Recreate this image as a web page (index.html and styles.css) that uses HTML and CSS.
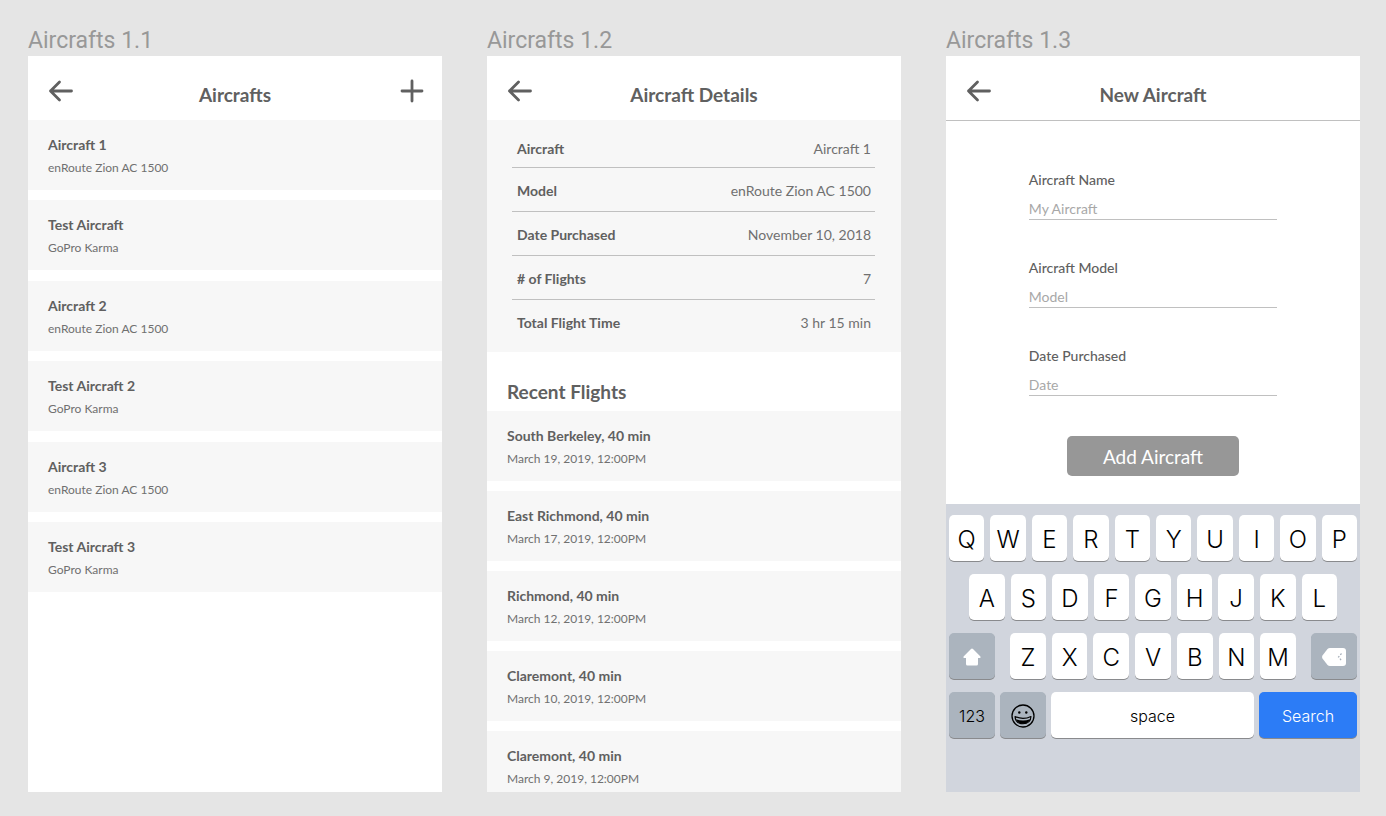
FILE: index.html
```html
<!DOCTYPE html>
<html lang="en">
<head>
<meta charset="utf-8">
<title>Aircrafts</title>
<link rel="stylesheet" href="styles.css">
</head>
<body>
<main class="board">
  <section class="artboard">
    <h2 class="artboard-name">Aircrafts 1.1</h2>
    <div class="screen">
      <header class="topbar">
        <button class="icon-button" type="button" aria-label="Back"><svg class="icon" viewBox="0 0 28 28"><path d="M25.500 14H4.500M13.500 5L4.500 14l9 9"/></svg></button>
        <h1 class="topbar-title">Aircrafts</h1>
        <button class="icon-button" type="button" aria-label="Add aircraft"><svg class="icon" viewBox="0 0 28 28"><path d="M6 14h20M16 4v20"/></svg></button>
      </header>
      <ul class="list list-aircraft">
        <li class="list-item"><h3 class="item-title">Aircraft 1</h3><p class="item-note">enRoute Zion AC 1500</p></li>
        <li class="list-item"><h3 class="item-title">Test Aircraft</h3><p class="item-note">GoPro Karma</p></li>
        <li class="list-item"><h3 class="item-title">Aircraft 2</h3><p class="item-note">enRoute Zion AC 1500</p></li>
        <li class="list-item"><h3 class="item-title">Test Aircraft 2</h3><p class="item-note">GoPro Karma</p></li>
        <li class="list-item"><h3 class="item-title">Aircraft 3</h3><p class="item-note">enRoute Zion AC 1500</p></li>
        <li class="list-item"><h3 class="item-title">Test Aircraft 3</h3><p class="item-note">GoPro Karma</p></li>
      </ul>
    </div>
  </section>

  <section class="artboard">
    <h2 class="artboard-name">Aircrafts 1.2</h2>
    <div class="screen">
      <header class="topbar">
        <button class="icon-button" type="button" aria-label="Back"><svg class="icon" viewBox="0 0 28 28"><path d="M25.500 14H4.500M13.500 5L4.500 14l9 9"/></svg></button>
        <h1 class="topbar-title">Aircraft Details</h1>
      </header>
      <div class="details">
        <table class="details-table">
          <tr><th scope="row">Aircraft</th><td>Aircraft 1</td></tr>
          <tr><th scope="row">Model</th><td>enRoute Zion AC 1500</td></tr>
          <tr><th scope="row">Date Purchased</th><td>November 10, 2018</td></tr>
          <tr><th scope="row"># of Flights</th><td>7</td></tr>
          <tr><th scope="row">Total Flight Time</th><td>3 hr 15 min</td></tr>
        </table>
      </div>
      <h2 class="section-title">Recent Flights</h2>
      <ul class="list">
        <li class="list-item"><h3 class="item-title">South Berkeley, 40 min</h3><p class="item-note">March 19, 2019, 12:00PM</p></li>
        <li class="list-item"><h3 class="item-title">East Richmond, 40 min</h3><p class="item-note">March 17, 2019, 12:00PM</p></li>
        <li class="list-item"><h3 class="item-title">Richmond, 40 min</h3><p class="item-note">March 12, 2019, 12:00PM</p></li>
        <li class="list-item"><h3 class="item-title">Claremont, 40 min</h3><p class="item-note">March 10, 2019, 12:00PM</p></li>
        <li class="list-item"><h3 class="item-title">Claremont, 40 min</h3><p class="item-note">March 9, 2019, 12:00PM</p></li>
      </ul>
    </div>
  </section>

  <section class="artboard">
    <h2 class="artboard-name">Aircrafts 1.3</h2>
    <div class="screen">
      <header class="topbar topbar-ruled">
        <button class="icon-button" type="button" aria-label="Back"><svg class="icon" viewBox="0 0 28 28"><path d="M25.500 14H4.500M13.500 5L4.500 14l9 9"/></svg></button>
        <h1 class="topbar-title">New Aircraft</h1>
      </header>
      <form class="form">
        <div class="field"><label for="name">Aircraft Name</label><input id="name" type="text" placeholder="My Aircraft"></div>
        <div class="field"><label for="model">Aircraft Model</label><input id="model" type="text" placeholder="Model"></div>
        <div class="field"><label for="date">Date Purchased</label><input id="date" type="text" placeholder="Date"></div>
        <button class="submit" type="button">Add Aircraft</button>
      </form>
      <div class="keyboard">
        <div class="key-row">
          <button class="key" type="button">Q</button><button class="key" type="button">W</button><button class="key" type="button">E</button><button class="key" type="button">R</button><button class="key" type="button">T</button><button class="key" type="button">Y</button><button class="key" type="button">U</button><button class="key" type="button">I</button><button class="key" type="button">O</button><button class="key" type="button">P</button>
        </div>
        <div class="key-row key-row-inset">
          <button class="key" type="button">A</button><button class="key" type="button">S</button><button class="key" type="button">D</button><button class="key" type="button">F</button><button class="key" type="button">G</button><button class="key" type="button">H</button><button class="key" type="button">J</button><button class="key" type="button">K</button><button class="key" type="button">L</button>
        </div>
        <div class="key-row key-row-shift">
          <button class="key key-side" type="button" aria-label="Shift"><svg class="key-icon" viewBox="0 0 28 28"><path fill="#fff" d="M13 6q1-1 2 0l7.200 7.200q1.300 1.800-1.200 1.800H20v6q0 1.500-1.500 1.500h-9Q8 22.500 8 21v-6H7q-2.500 0-1.200-1.800z"/></svg></button>
          <div class="key-group">
            <button class="key" type="button">Z</button><button class="key" type="button">X</button><button class="key" type="button">C</button><button class="key" type="button">V</button><button class="key" type="button">B</button><button class="key" type="button">N</button><button class="key" type="button">M</button>
          </div>
          <button class="key key-side" type="button" aria-label="Delete"><svg class="key-icon" viewBox="0 0 28 28"><path fill="#fff" d="M10 5h13q3 0 3 3v12q0 3-3 3H10q-1.500 0-2.500-1l-5-6.500q-1-1.500 0-3L7.500 6Q8.500 5 10 5z"/><path fill="none" stroke="#a3acb8" stroke-width="1.200" stroke-dasharray="1.800 1.600" d="M21.500 10.500L18.500 14l3 3.500"/></svg></button>
        </div>
        <div class="key-row key-row-bottom">
          <button class="key key-side key-label" type="button">123</button>
          <button class="key key-side" type="button" aria-label="Emoji"><svg class="key-icon" viewBox="0 0 28 28"><circle cx="14" cy="14" r="11" fill="none" stroke="#000" stroke-width="1.300"/><circle cx="10.300" cy="10.500" r="1.200"/><circle cx="17.300" cy="10.500" r="1.200"/><path fill="none" stroke="#000" stroke-width="1.100" stroke-linejoin="round" d="M6 14.500q8 3.800 16 0-.4 7.200-8 7.200T6 14.500z"/><path d="M7 17.300q7 2.400 14 0-1.500 4.400-7 4.400T7 17.300z"/></svg></button>
          <button class="key key-label" type="button">space</button>
          <button class="key key-search key-label" type="button">Search</button>
        </div>
      </div>
    </div>
  </section>
</main>
</body>
</html>
```
FILE: styles.css
```css
* {
  box-sizing: border-box;
}

body {
  margin: 0;
  background: #e5e5e5;
  color: #606060;
  font-family: Lato, "Open Sans", sans-serif;
}

h1, h2, h3, p, ul {
  margin: 0;
  padding: 0;
}

button, input {
  font: inherit;
  border: 0;
  padding: 0;
}

.board {
  display: grid;
  grid-template-columns: repeat(3, minmax(0, 1fr));
  gap: 45px;
  height: 100vh;
  padding: 26px 26px 24px 28px;
}

.artboard {
  display: flex;
  flex-direction: column;
  min-height: 0;
}

.artboard-name {
  color: #989898;
  font: 400 23px/30px Roboto, sans-serif;
}

.screen {
  display: flex;
  flex: 1;
  flex-direction: column;
  min-height: 0;
  overflow: hidden;
  background: #fff;
}

.topbar {
  display: grid;
  flex: none;
  grid-template-columns: 28px 1fr 28px;
  align-items: end;
  height: 64px;
  padding: 0 18px 15px;
}

.topbar-ruled {
  height: 65px;
  border-bottom: 1px solid #c0c0c0;
}

.topbar-title {
  font-size: 19px;
  font-weight: 700;
  line-height: 20px;
  text-align: center;
}

.icon-button {
  width: 28px;
  height: 28px;
  background: none;
}

.icon {
  display: block;
  fill: none;
  stroke: #606060;
  stroke-width: 2.8;
  stroke-linecap: round;
  stroke-linejoin: round;
}

.list {
  display: flex;
  flex-direction: column;
  gap: 10px;
  list-style: none;
}

.list-item {
  flex: none;
  height: 70px;
  padding: 16px 20px;
  background: #f7f7f7;
}

.list-aircraft .list-item:nth-child(even) {
  margin-bottom: 1px;
}

.item-title {
  font-size: 14px;
  font-weight: 700;
  line-height: 18px;
}

.item-note {
  margin-top: 6px;
  color: #707070;
  font-size: 12px;
  line-height: 16px;
}

.details {
  flex: none;
  padding: 4px 26px 8px 25px;
  background: #f7f7f7;
}

.details-table {
  width: 100%;
  border-collapse: separate;
  border-spacing: 0;
  font-size: 14px;
  line-height: 20px;
}

.details-table th,
.details-table td {
  height: 44px;
  padding: 3px 4px 0 5px;
  border-bottom: 1px solid #c0c0c0;
}

.details-table tr:first-child > * {
  padding-top: 6px;
}

.details-table tr:last-child > * {
  border-bottom-color: transparent;
}

.details-table th {
  text-align: left;
}

.details-table td {
  color: #707070;
  text-align: right;
}

.section-title {
  flex: none;
  padding: 28px 20px 7px;
  font-size: 19px;
  font-weight: 700;
  line-height: 24px;
}

.form {
  display: flex;
  flex-direction: column;
  align-items: center;
  gap: 38px;
  padding: 49px 20% 28px;
}

.field {
  display: flex;
  flex-direction: column;
  gap: 8px;
  width: 100%;
}

.field label {
  font-size: 14px;
  font-weight: 500;
  line-height: 20px;
}

.field input {
  width: 100%;
  height: 22px;
  border-bottom: 1px solid #c0c0c0;
  border-radius: 0;
  background: none;
  color: #606060;
  font-size: 14px;
}

.field input::placeholder {
  color: #a8a8a8;
  opacity: 1;
}

.submit {
  width: 172px;
  height: 40px;
  margin-top: 2px;
  border-radius: 5px;
  background: #979797;
  color: #fff;
  font-size: 19px;
}

.keyboard {
  display: flex;
  flex: none;
  flex-direction: column;
  gap: 13px;
  margin-top: auto;
  padding: 11px 3px 54px;
  background: #d1d5dd;
  font-family: Inter, Roboto, sans-serif;
}

.key-row,
.key-group {
  display: flex;
  gap: 6px;
}

.key-row-inset {
  padding: 0 20px;
}

.key-row-shift {
  gap: 15px;
}

.key-row-bottom {
  gap: 5px;
}

.key-group {
  flex: 1;
}

.key {
  display: flex;
  flex: 1 1 0;
  align-items: center;
  justify-content: center;
  min-width: 0;
  height: 46px;
  padding-top: 2px;
  border-radius: 5px;
  background: #fff;
  box-shadow: 0 1px 0 #898a8d;
  color: #000;
  font-size: 24px;
  font-weight: 300;
}

.key-side {
  flex: 0 0 46px;
  background: #abb4be;
}

.key-label {
  font-size: 16px;
}

.key-search {
  flex: 0 0 98px;
  background: #2c7cf6;
  color: #fff;
}

.key-icon {
  width: 28px;
  height: 28px;
}
```
